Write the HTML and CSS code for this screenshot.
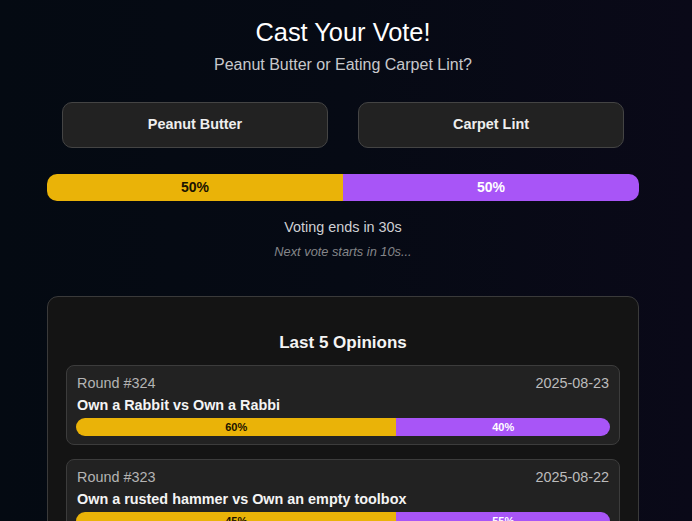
FILE: index.html
```html
<!DOCTYPE html>
<html>
<head>
<meta charset="utf-8">
<link rel="stylesheet" href="styles.css">
</head>
<body>
<main class="page">
  <h1 class="title">Cast Your Vote!</h1>
  <p class="subtitle">Peanut Butter or Eating Carpet Lint?</p>
  <div class="choices">
    <button class="choice">Peanut Butter</button>
    <button class="choice">Carpet Lint</button>
  </div>
  <div class="bar bar-main">
    <div class="seg seg-a" style="width:50%">50%</div>
    <div class="seg seg-b" style="width:50%">50%</div>
  </div>
  <p class="ends">Voting ends in 30s</p>
  <p class="next">Next vote starts in 10s...</p>
  <section class="history">
    <h2 class="history-title">Last 5 Opinions</h2>
    <div class="rounds">
      <div class="round">
        <div class="round-head"><span>Round #324</span><span class="date">2025-08-23</span></div>
        <div class="round-q">Own a Rabbit vs Own a Rabbi</div>
        <div class="bar bar-small">
          <div class="seg seg-a" style="width:60%">60%</div>
          <div class="seg seg-b" style="width:40%">40%</div>
        </div>
      </div>
      <div class="round">
        <div class="round-head"><span>Round #323</span><span class="date">2025-08-22</span></div>
        <div class="round-q">Own a rusted hammer vs Own an empty toolbox</div>
        <div class="bar bar-small">
          <div class="seg seg-a" style="width:60%">45%</div>
          <div class="seg seg-b" style="width:40%">55%</div>
        </div>
      </div>
    </div>
  </section>
</main>
</body>
</html>
```
FILE: styles.css
```css
html, body {
  margin: 0;
  padding: 0;
  height: 100%;
  overflow: hidden;
}
body {
  background: linear-gradient(90deg, #040a12 0%, #060a14 50%, #0a0918 100%);
  font-family: "Liberation Sans", Arial, sans-serif;
  color: #f2f2f2;
}
.page {
  width: 592px;
  margin: 0 auto;
  padding: 17px 6px 0 0;
  box-sizing: content-box;
}
.title {
  margin: 0;
  font-size: 25.4px;
  line-height: 30px;
  font-weight: normal;
  text-align: center;
  color: #ffffff;
}
.subtitle {
  margin: 8px 0 0;
  font-size: 16px;
  line-height: 20px;
  text-align: center;
  color: #c8c8cc;
}
.choices {
  display: flex;
  gap: 30px;
  margin: 27px 15px 0;
}
.choice {
  flex: 1;
  height: 46px;
  background: #222222;
  border: 1px solid #444444;
  border-radius: 10px;
  color: #eeeeee;
  font-family: "Liberation Sans", Arial, sans-serif;
  font-weight: bold;
  font-size: 14.4px;
  padding: 0 0 3px;
}
.bar {
  display: flex;
  overflow: hidden;
}
.bar-main {
  margin-top: 26px;
  height: 27px;
  border-radius: 10px;
  font-size: 14px;
}
.bar-main .seg {
  padding-bottom: 1px;
}
.seg {
  display: flex;
  align-items: center;
  justify-content: center;
  font-weight: bold;
}
.seg-a {
  background: #eab308;
  color: #1a1200;
}
.seg-b {
  background: #a855f7;
  color: #ffffff;
}
.ends {
  margin: 16px 0 0;
  font-size: 14.4px;
  line-height: 20px;
  text-align: center;
  color: #cfd0d4;
}
.next {
  margin: 7px 0 0;
  font-size: 12.8px;
  line-height: 16px;
  font-style: italic;
  text-align: center;
  color: #85868a;
}
.history {
  margin-top: 36px;
  background: #141414;
  border: 1px solid #3a3a3a;
  border-radius: 11px;
  padding: 35px 18px 18px;
}
.history-title {
  margin: 0 0 11px;
  font-size: 17px;
  line-height: 22px;
  text-align: center;
  color: #f4f4f4;
}
.rounds {
  display: flex;
  flex-direction: column;
  gap: 14px;
}
.round {
  background: #222222;
  border: 1px solid #3c3c3c;
  border-radius: 8px;
  padding: 8px 9px 8px 9px;
}
.round-head {
  display: flex;
  justify-content: space-between;
  font-size: 14.4px;
  line-height: 18px;
  color: #b4b4b4;
  padding: 0 1px;
}
.round-head .date {
  color: #bcbcbc;
}
.round-q {
  margin-top: 4px;
  padding: 0 1px;
  font-size: 14.4px;
  line-height: 18px;
  font-weight: bold;
  color: #f4f4f4;
}
.bar-small {
  margin-top: 4px;
  height: 18px;
  border-radius: 9px;
  font-size: 11px;
}
```
